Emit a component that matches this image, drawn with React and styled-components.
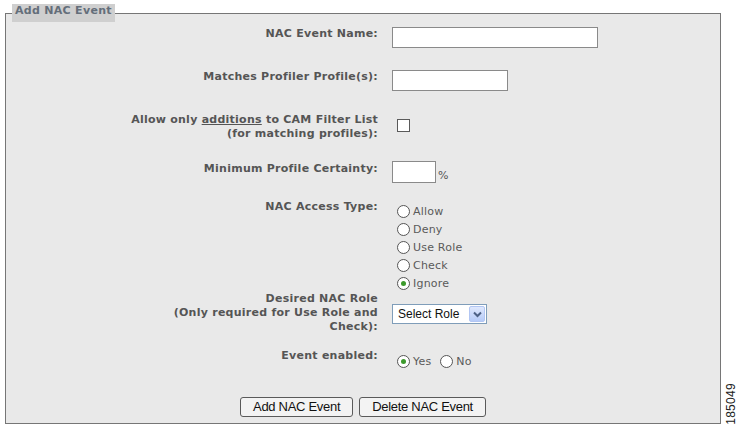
import React from "react";
import styled, { createGlobalStyle } from "styled-components";

const Global = createGlobalStyle`
  html, body { margin: 0; padding: 0; background: #ffffff; }
  body { font-family: "DejaVu Sans", Verdana, sans-serif; }
`;

const Page = styled.div`
  display: flex;
  align-items: flex-start;
  padding: 4px 0 0 5px;
  width: 739px;
  height: 429px;
  box-sizing: border-box;
`;

const Frame = styled.fieldset`
  box-sizing: border-box;
  width: 716px;
  margin: 0;
  padding: 5px 0 6px 0;
  border: 1px solid #767676;
  background: #e9e9e9;
  min-width: 0;
`;

const Legend = styled.legend`
  margin-left: 6px;
  padding: 0 3px;
  height: 18px;
  line-height: 18px;
  background: #cfcfcf;
  color: #646e7a;
  font: bold 11px "DejaVu Sans", Verdana, sans-serif;
  letter-spacing: 0.3px;
`;

const Row = styled.div`
  display: grid;
  grid-template-columns: 372px 1fr;
  column-gap: 14px;
  align-items: start;
  margin-top: ${(p) => p.$mt || 0}px;
`;

const Label = styled.div`
  text-align: right;
  font: bold 11px/14px "DejaVu Sans", Verdana, sans-serif;
  letter-spacing: 0.25px;
  color: #555555;
  margin-top: ${(p) => p.$mt || 0}px;
  u { text-decoration: underline; }
`;

const Control = styled.div`
  display: flex;
  align-items: ${(p) => (p.$column ? "flex-start" : "center")};
  flex-direction: ${(p) => (p.$column ? "column" : "row")};
  margin-top: ${(p) => p.$mt || 0}px;
  margin-left: ${(p) => p.$ml || 0}px;
`;

const TextInput = styled.div`
  box-sizing: border-box;
  width: ${(p) => p.$w}px;
  height: ${(p) => p.$h || 21}px;
  background: #ffffff;
  border: 1px solid #8a8a8a;
`;

const Check = styled.span`
  box-sizing: border-box;
  display: inline-block;
  width: 13px;
  height: 13px;
  background: #ffffff;
  border: 1px solid #5a5a5a;
`;

const Percent = styled.span`
  margin-left: 2px;
  font: 11px "DejaVu Sans", Verdana, sans-serif;
  color: #555;
  align-self: flex-end;
  padding-bottom: 1px;
`;

const RadioItem = styled.label`
  display: flex;
  align-items: center;
  height: 18px;
  margin-right: ${(p) => p.$mr || 0}px;
  font: 11px "DejaVu Sans", Verdana, sans-serif;
  letter-spacing: 0.2px;
  color: #5a5a5a;
`;

const Circle = styled.span`
  box-sizing: border-box;
  position: relative;
  width: 13px;
  height: 13px;
  margin-right: 3px;
  border-radius: 50%;
  border: 1px solid #555;
  background: #ffffff;
  &::after {
    content: "";
    display: ${(p) => (p.$on ? "block" : "none")};
    position: absolute;
    left: 3px;
    top: 3px;
    width: 5px;
    height: 5px;
    border-radius: 50%;
    background: #3c9a2c;
  }
`;

const SelectBox = styled.div`
  box-sizing: border-box;
  display: flex;
  align-items: center;
  justify-content: space-between;
  width: 95px;
  height: 20px;
  padding: 0 1px 0 5px;
  background: #ffffff;
  border: 1px solid #7f9db9;
  font: 12px "Liberation Sans", Arial, sans-serif;
  color: #111;
`;

const Arrow = styled.span`
  box-sizing: border-box;
  display: flex;
  align-items: center;
  justify-content: center;
  width: 16px;
  height: 16px;
  border: 1px solid #b2c6f3;
  border-radius: 2px;
  background: linear-gradient(#dfe8fd, #b6cbf8);
`;

const Buttons = styled.div`
  display: flex;
  justify-content: center;
  gap: 6px;
  margin-top: 27px;
`;

const Button = styled.button`
  box-sizing: border-box;
  height: 20px;
  padding: 0 12px;
  border: 1px solid #5a5a5a;
  border-radius: 3px;
  background: #f3f3f3;
  font: 13px "Liberation Sans", Arial, sans-serif;
  letter-spacing: -0.3px;
  color: #111;
  line-height: 18px;
`;

const FigNum = styled.div`
  align-self: flex-end;
  writing-mode: vertical-rl;
  transform: rotate(180deg);
  margin-left: 3px;
  margin-bottom: 4px;
  font: 12px "Liberation Sans", Arial, sans-serif;
  color: #222;
  letter-spacing: 0.3px;
`;

function Radio({ label, on, mr }) {
  return (
    <RadioItem $mr={mr}>
      <Circle $on={on} />
      {label}
    </RadioItem>
  );
}

export default function App() {
  const types = ["Allow", "Deny", "Use Role", "Check", "Ignore"];
  return (
    <>
      <Global />
      <Page>
        <Frame>
          <Legend>Add NAC Event</Legend>

          <Row>
            <Label>NAC Event Name:</Label>
            <Control>
              <TextInput $w={206} />
            </Control>
          </Row>

          <Row $mt={22}>
            <Label>Matches Profiler Profile(s):</Label>
            <Control>
              <TextInput $w={116} />
            </Control>
          </Row>

          <Row $mt={22}>
            <Label>
              Allow only <u>additions</u> to CAM Filter List
              <br />
              (for matching profiles):
            </Label>
            <Control $mt={6} $ml={5}>
              <Check />
            </Control>
          </Row>

          <Row $mt={20}>
            <Label $mt={1}>Minimum Profile Certainty:</Label>
            <Control>
              <TextInput $w={44} $h={22} />
              <Percent>%</Percent>
            </Control>
          </Row>

          <Row $mt={17}>
            <Label>NAC Access Type:</Label>
            <Control $column $mt={2} $ml={5}>
              {types.map((t) => (
                <Radio key={t} label={t} on={t === "Ignore"} />
              ))}
            </Control>
          </Row>

          <Row $mt={0}>
            <Label>
              Desired NAC Role
              <br />
              (Only required for Use Role and
              <br />
              Check):
            </Label>
            <Control $mt={12}>
              <SelectBox>
                Select Role
                <Arrow>
                  <svg width="9" height="7" viewBox="0 0 9 7">
                    <path d="M1 1.5 L4.5 5 L8 1.5" fill="none" stroke="#4d6185" strokeWidth="2" />
                  </svg>
                </Arrow>
              </SelectBox>
            </Control>
          </Row>

          <Row $mt={15}>
            <Label>Event enabled:</Label>
            <Control $mt={3} $ml={5}>
              <Radio label="Yes" on mr={9} />
              <Radio label="No" />
            </Control>
          </Row>

          <Buttons>
            <Button>Add NAC Event</Button>
            <Button>Delete NAC Event</Button>
          </Buttons>
        </Frame>
        <FigNum>185049</FigNum>
      </Page>
    </>
  );
}
